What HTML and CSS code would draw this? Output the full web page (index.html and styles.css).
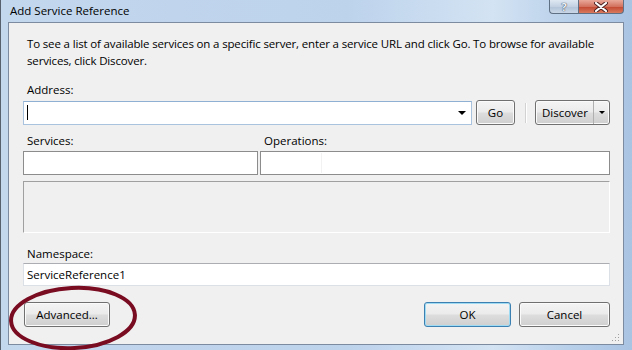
FILE: index.html
```html
<html>
    <head>
        <link rel="stylesheet" href="styles.css">
    </head>
    <body>
        <div class="window">
            <!--title bar-->
            <div class="titlebar">
                <span class="title">Add Service Reference</span>
                <div class="caption">
                    <span class="cap help">?</span>
                    <span class="cap close">
                        <svg width="14" height="10" viewBox="0 0 14 10">
                            <path d="M2 1 L12 9 M12 1 L2 9" stroke="#4a2020" stroke-width="4" stroke-linecap="round"/>
                            <path d="M2 1 L12 9 M12 1 L2 9" stroke="#ffffff" stroke-width="2.2" stroke-linecap="round"/>
                        </svg>
                    </span>
                </div>
            </div>

            <!--dialog body-->
            <div class="client">
                <p class="intro">To see a list of available services on a specific server, enter a service URL and click Go. To browse for available services, click Discover.</p>

                <div class="label">Address:</div>
                <div class="address-row">
                    <div class="combo">
                        <span class="text-caret"></span>
                        <span class="arrow"></span>
                    </div>
                    <button type="button" class="btn go">Go</button>
                    <span class="separator"></span>
                    <div class="btn split">
                        <span class="split-text">Discover</span>
                        <span class="split-drop"><span class="arrow"></span></span>
                    </div>
                </div>

                <div class="lists">
                    <div>
                        <div class="label">Services:</div>
                        <div class="listbox"></div>
                    </div>
                    <div>
                        <div class="label">Operations:</div>
                        <div class="listbox"><span class="column"></span></div>
                    </div>
                </div>

                <div class="status-panel"></div>

                <div class="label namespace-label">Namespace:</div>
                <div class="textbox">ServiceReference1</div>

                <div class="button-row">
                    <button type="button" class="btn advanced">Advanced...</button>
                    <span class="spacer"></span>
                    <button type="button" class="btn ok">OK</button>
                    <button type="button" class="btn cancel">Cancel</button>
                </div>

                <svg class="grip" width="8" height="8" viewBox="0 0 8 8">
                    <rect x="6" y="0" width="1" height="1" fill="#a0a0a0"/>
                    <rect x="3" y="3" width="1" height="1" fill="#a0a0a0"/>
                    <rect x="6" y="3" width="1" height="1" fill="#a0a0a0"/>
                    <rect x="0" y="6" width="1" height="1" fill="#a0a0a0"/>
                    <rect x="3" y="6" width="1" height="1" fill="#a0a0a0"/>
                    <rect x="6" y="6" width="1" height="1" fill="#a0a0a0"/>
                </svg>
            </div>

            <!--hand drawn mark round the Advanced button-->
            <svg class="annotation" width="632" height="350" viewBox="0 0 632 350">
                <ellipse cx="73" cy="318" rx="62" ry="30" transform="rotate(-3 73 318)" fill="none" stroke="#7a0c22" stroke-width="4"/>
            </svg>
        </div>
    </body>
</html>
```

FILE: styles.css
```css
body{
    margin:0;
    font-family:"Open Sans", "Noto Sans", sans-serif;
    font-size:11.5px;
    color:#000000;}

/*outer aero frame*/
.window{
    position:relative;
    width:632px;
    height:350px;
    overflow:hidden;
    box-sizing:border-box;
    border-left:1px solid #56616d;
    background:linear-gradient(to right, #c3d7ed 0%, #bdd3ec 55%, #d3e3f3 78%, #b9d0ea 90%, #a9c3e2 100%);}

.titlebar{
    display:flex;
    align-items:flex-start;
    height:22px;
    padding-left:9px;
    padding-right:8px;}

.title{
    font-size:11.5px;
    line-height:21px;
    flex:1;}

.caption{
    display:flex;}

.cap{
    display:flex;
    align-items:center;
    justify-content:center;
    height:14px;
    box-sizing:border-box;
    border:1px solid #5f6f84;
    border-top:none;}

.cap.help{
    width:29px;
    border-right:none;
    border-radius:0 0 0 4px;
    background:linear-gradient(#dfe8f3, #c3d1e2 50%, #b2c3d8 51%, #c9d7e7);
    color:#eef3f9;
    font-weight:bold;
    font-size:11px;
    line-height:11px;
    text-shadow:0 0 1px #3a4656, 0 0 1px #3a4656;}

.cap.close{
    width:46px;
    border-radius:0 0 4px 0;
    background:linear-gradient(#e9a899, #d2725f 50%, #c24630 51%, #d97a5e);}

/*gray client area*/
.client{
    position:relative;
    margin-left:7px;
    width:616px;
    height:323px;
    box-sizing:border-box;
    border:1px solid #7c8ba0;
    background:#f0f0f0;
    padding:13px 13px 0 14px;}

.intro{
    margin:0 0 13px 4px;
    line-height:16.5px;
    letter-spacing:-0.15px;}

.label{
    margin-left:4px;
    line-height:16px;
    height:16px;}

.address-row{
    display:flex;
    align-items:center;
    margin-top:2px;
    height:25px;}

.combo{
    flex:1;
    height:24px;
    box-sizing:border-box;
    border:1px solid #a9c3de;
    border-top-color:#8fb0d2;
    background:#ffffff;
    display:flex;
    align-items:center;
    justify-content:space-between;
    padding:0 5px 0 3px;}

.text-caret{
    width:1px;
    height:15px;
    background:#000000;}

.arrow{
    width:0;
    height:0;
    border-left:4px solid transparent;
    border-right:4px solid transparent;
    border-top:4px solid #000000;}

/*win7 style push buttons*/
.btn{
    box-sizing:border-box;
    height:25px;
    padding:0;
    border:1px solid #707070;
    border-radius:3px;
    background:linear-gradient(#f4f4f4, #ebebeb 48%, #dddddd 52%, #cfcfcf);
    box-shadow:inset 0 0 0 1px #fbfbfb;
    font-family:inherit;
    font-size:11.5px;
    color:#000000;
    text-align:center;}

.btn.go{
    width:39px;
    margin-left:4px;}

.separator{
    width:1px;
    height:20px;
    margin:0 9px 0 10px;
    background:#d2d2d2;
    box-shadow:1px 0 0 #ffffff;}

.btn.split{
    width:75px;
    display:flex;
    align-items:stretch;}

.split-text{
    flex:1;
    line-height:23px;
    padding-left:1px;}

.split-drop{
    width:15px;
    display:flex;
    align-items:center;
    justify-content:center;
    border-left:1px solid #b0b0b0;}

.split-drop .arrow{
    border-left-width:3px;
    border-right-width:3px;
    border-top-width:3px;}

.lists{
    display:grid;
    grid-template-columns:235px 350px;
    column-gap:2px;
    margin-top:8px;}

.listbox{
    position:relative;
    margin-top:2px;
    height:24px;
    box-sizing:border-box;
    border:1px solid #8c8c8c;
    background:#ffffff;}

.column{
    position:absolute;
    left:60px;
    top:1px;
    bottom:1px;
    width:1px;
    background:#f2f2f2;}

.status-panel{
    margin-top:6px;
    height:52px;
    box-sizing:border-box;
    border:1px solid #ffffff;
    border-top-color:#a0a0a0;
    border-left-color:#a0a0a0;
    background:#f0f0f0;}

.namespace-label{
    margin-top:13px;}

.textbox{
    margin-top:1px;
    height:23px;
    box-sizing:border-box;
    border:1px solid #dbdfe6;
    border-top-color:#abadb3;
    background:#ffffff;
    padding-left:3px;
    line-height:21px;}

.button-row{
    display:flex;
    margin-top:16px;}

.btn.advanced{
    width:86px;
    margin-left:1px;}

.spacer{
    flex:1;}

.btn.ok{
    width:87px;
    margin-right:8px;
    border-color:#3c7fb1;
    box-shadow:inset 0 0 0 1px #9fdcf4;}

.btn.cancel{
    width:91px;}

.grip{
    position:absolute;
    right:3px;
    bottom:2px;}

/*red ring drawn on top of the screenshot*/
.annotation{
    position:absolute;
    left:-1px;
    top:0;
    pointer-events:none;}
```
